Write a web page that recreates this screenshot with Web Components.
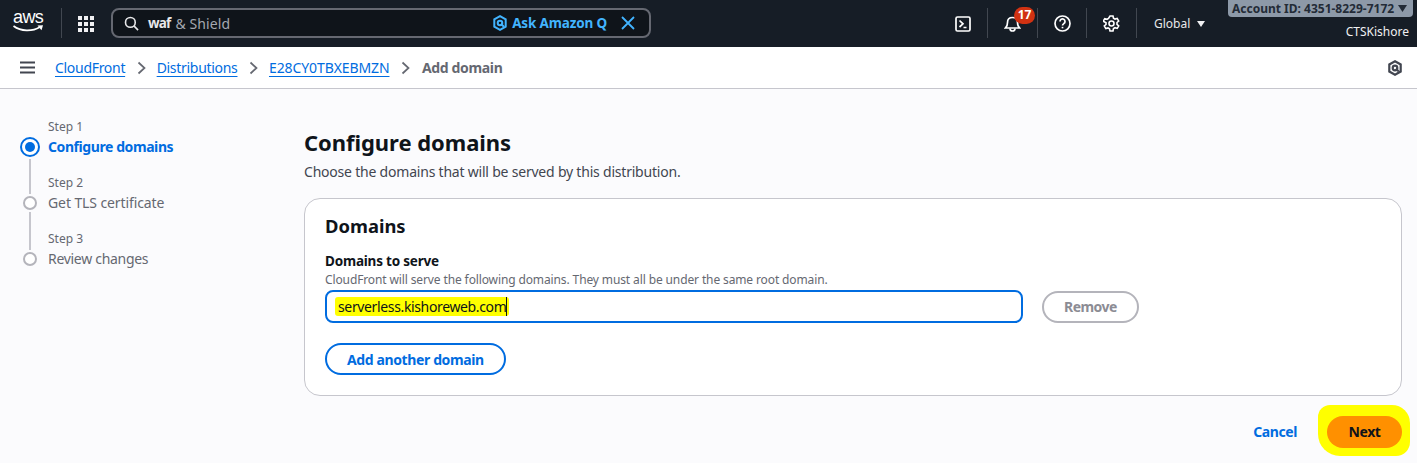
<!DOCTYPE html>
<html lang="en">
<head>
<meta charset="utf-8">
<title>Add domain</title>
<style>
html, body { margin: 0; height: 100%; }
body { background: #fbfbfd; font-family: "Noto Sans", sans-serif; color: #0f141a; overflow: hidden; }
</style>
</head>
<body>
<top-bar></top-bar>
<bread-bar></bread-bar>
<wizard-page>
    <wizard-steps slot="steps"></wizard-steps>
    <domains-form></domains-form>
</wizard-page>

<script>
const FONT = '"Noto Sans", sans-serif';

class UiElement extends HTMLElement {
    constructor() {
        super();
        this.attachShadow({ mode: 'open' }).innerHTML = this.render();
    }
    render() { return ''; }
}

class TopBar extends UiElement {
    render() {
        return `
        <style>
            :host { display: flex; align-items: stretch; height: 47px; background: #161d26; color: #fff; font-family: ${FONT}; }
            .logo { width: 61px; padding: 8px 0 0 13px; box-sizing: border-box; }
            .aws { position: relative; width: 30px; height: 30px; font: 18px/19px "Liberation Sans", sans-serif; text-align: center; letter-spacing: -.6px; }
            .aws svg { position: absolute; left: 0; top: 17px; }
            .sep { width: 1px; background: #414750; margin: 8px 0 9px; flex: none; }
            .grid { width: 48px; display: flex; align-items: center; justify-content: center; }
            .search { width: 540px; height: 30px; margin: 8px 0 0 1px; border: 2px solid #656871; border-radius: 8px; background: #0f141a; display: flex; align-items: center; padding: 0 14px 0 11px; box-sizing: border-box; font-size: 14px; }
            .search .q { margin-left: 9px; font-size: 13.5px; font-weight: 700; color: #e8e8ea; letter-spacing: -.8px; }
            .search .rest { color: #a4a8b0; margin-left: 5px; flex: 1; letter-spacing: .1px; }
            .ask { color: #42b4ff; font-weight: 700; font-size: 13.5px; letter-spacing: -.15px; margin: 0 14px 0 5px; }
            .spacer { flex: 1; }
            .ic { width: 49px; display: flex; align-items: center; justify-content: center; position: relative; }
            .ic.narrow { width: 48px; }
            .badge { position: absolute; left: 26px; top: 7px; width: 21px; height: 17px; border-radius: 9px; background: #d13212; color: #fff; font-size: 12px; font-weight: 700; line-height: 16px; text-align: center; }
            .region { width: 91px; padding-left: 17px; box-sizing: border-box; display: flex; align-items: center; gap: 7px; font-size: 12px; color: #e8e8ea; }
            .account { width: 189px; display: flex; flex-direction: column; align-items: flex-end; padding-right: 4px; box-sizing: border-box; }
            .pill { width: 185px; height: 17px; padding-left: 4px; box-sizing: border-box; background: #8d99a8; border-radius: 0 0 4px 4px; color: #232b37; font-size: 12px; font-weight: 700; line-height: 16px; display: flex; align-items: center; gap: 4px; white-space: nowrap; }
            .user { font-size: 12px; margin: 6px 4px 0 0; line-height: 17px; color: #f0f0f2; }
        </style>
        <div class="logo"><div class="aws">aws<svg width="31" height="8" viewBox="0 0 31 8"><path d="M.5 1C8 6.500 19 6.800 27 2" fill="none" stroke="#fff" stroke-width="1.700"/><path d="M24.500 .5l5.500-.3-1.500 5z" fill="#fff"/></svg></div></div>
        <div class="sep"></div>
        <div class="grid">
            <svg width="16" height="16" viewBox="0 0 16 16" fill="#f0f0f2"><rect x="0" y="0" width="4" height="4"/><rect x="6" y="0" width="4" height="4"/><rect x="12" y="0" width="4" height="4"/><rect x="0" y="6" width="4" height="4"/><rect x="6" y="6" width="4" height="4"/><rect x="12" y="6" width="4" height="4"/><rect x="0" y="12" width="4" height="4"/><rect x="6" y="12" width="4" height="4"/><rect x="12" y="12" width="4" height="4"/></svg>
        </div>
        <div class="search">
            <svg width="15" height="15" viewBox="0 0 16 16" fill="none" stroke="#e8e8ea" stroke-width="1.700"><circle cx="6.800" cy="6.800" r="5.200"/><path d="M10.600 10.600L15 15"/></svg>
            <span class="q">waf</span><span class="rest">&amp; Shield</span>
            <svg width="14" height="16" viewBox="0 0 14 16" fill="none" stroke="#42b4ff" stroke-width="2"><path d="M7 1.200l5.700 3.200v7.200L7 14.800l-5.700-3.200V4.400z"/><circle cx="7" cy="8" r="2.300"/><path d="M7.800 8.800l3.200 3"/></svg>
            <span class="ask">Ask Amazon Q</span>
            <svg width="14" height="14" viewBox="0 0 14 14" fill="none" stroke="#42b4ff" stroke-width="1.800"><path d="M1 1l12 12M13 1L1 13"/></svg>
        </div>
        <div class="spacer"></div>
        <div class="ic">
            <svg width="16" height="16" viewBox="0 0 16 16" fill="none" stroke="#fff" stroke-width="1.700"><rect x="1" y="1" width="14" height="14" rx="1.500"/><path d="M4.500 4.500L8 7.800l-3.500 3.200M8.500 11.500h3"/></svg>
        </div>
        <div class="sep"></div>
        <div class="ic">
            <svg width="17" height="17" viewBox="0 0 17 17" fill="none" stroke="#fff" stroke-width="1.700"><path d="M1.500 13h14c-1.600-1.400-2-2.800-2-5.500 0-3-2-5-5-5s-5 2-5 5c0 2.700-.4 4.100-2 5.500z"/><path d="M6 13.500a2.500 2.500 0 0 0 5 0"/></svg>
            <span class="badge">17</span>
        </div>
        <div class="sep"></div>
        <div class="ic narrow">
            <svg width="17" height="17" viewBox="0 0 17 17" fill="none" stroke="#fff" stroke-width="1.700"><circle cx="8.500" cy="8.500" r="7.500"/><path d="M6 6.500a2.500 2.500 0 1 1 3.800 2.100c-.9.6-1.300 1-1.300 2"/><path d="M8.500 11.800v1.500"/></svg>
        </div>
        <div class="sep"></div>
        <div class="ic">
            <svg width="17" height="17" viewBox="0 0 17 17" fill="none" stroke="#fff" stroke-width="1.600"><circle cx="8.500" cy="8.500" r="2.500"/><path d="M7 1h3l.5 2.200 1.500.9 2.200-.7 1.500 2.600-1.700 1.500v1.800l1.700 1.500-1.500 2.600-2.200-.7-1.500.9L10 16H7l-.5-2.200-1.500-.9-2.200.7-1.500-2.600 1.700-1.500V7.700L.3 6.200 1.800 3.600l2.200.7 1.500-.9z"/></svg>
        </div>
        <div class="sep"></div>
        <div class="region">Global <svg width="8" height="6" viewBox="0 0 8 6" fill="#f0f0f2"><path d="M0 0h8L4 6z"/></svg></div>
        <div class="account">
            <div class="pill">Account ID: 4351-8229-7172 <svg width="9" height="7" viewBox="0 0 9 7" fill="#232b37"><path d="M0 0h9L4.500 7z"/></svg></div>
            <div class="user">CTSKishore</div>
        </div>`;
    }
}

class BreadBar extends UiElement {
    render() {
        const chevron = '<svg class="chev" width="9" height="14" viewBox="0 0 9 14" fill="none" stroke="#656871" stroke-width="1.700"><path d="M1.500 1.500L7.500 7l-6 5.500"/></svg>';
        return `
        <style>
            :host { display: flex; align-items: center; height: 42px; background: #fff; border-bottom: 1px solid #c6c6cd; box-sizing: border-box; padding-left: 20px; font-family: ${FONT}; font-size: 14px; }
            .menu { margin-right: 20px; display: flex; }
            a { color: #006ce0; text-decoration: underline; text-underline-offset: 3px; letter-spacing: -.3px; }
            a.id { letter-spacing: -.1px; }
            .chev { margin: 0 10.5px 0 12px; flex: none; }
            .cur { color: #656871; font-weight: 700; letter-spacing: -.35px; margin-left: 1px; }
            .spacer { flex: 1; }
            .help { margin-right: 15px; display: flex; }
        </style>
        <div class="menu"><svg width="15" height="13" viewBox="0 0 15 13" fill="none" stroke="#424650" stroke-width="2"><path d="M0 1.500h15M0 6.500h15M0 11.500h15"/></svg></div>
        <a>CloudFront</a>${chevron}<a>Distributions</a>${chevron}<a class="id">E28CY0TBXEBMZN</a>${chevron}<span class="cur">Add domain</span>
        <div class="spacer"></div>
        <div class="help"><svg width="14" height="16" viewBox="0 0 14 16" fill="none" stroke="#424650" stroke-width="2.200"><path d="M7 1.300l5.700 3.200v7L7 14.700l-5.700-3.200v-7z"/><circle cx="7" cy="8" r="2.300"/><path d="M7.800 8.800l3 2.700"/></svg></div>`;
    }
}

class WizardPage extends UiElement {
    render() {
        return `
        <style>
            :host { display: grid; grid-template-columns: 304px 1098px; font-family: ${FONT}; }
            .main { padding-top: 39px; }
        </style>
        <slot name="steps"></slot>
        <div class="main"><slot></slot></div>`;
    }
}

class WizardSteps extends UiElement {
    render() {
        const step = (n, name, cls) => `
            <div class="step ${cls}">
                <div class="rail"><span class="line"></span></div>
                <div class="small">Step ${n}</div>
                <div class="dot"></div>
                <div class="name">${name}</div>
                <div class="tail"><span class="line"></span></div>
            </div>`;
        return `
        <style>
            :host { display: block; padding: 30px 0 0 20px; font-family: ${FONT}; color: #656871; }
            .step { display: grid; grid-template-columns: 20px 1fr; column-gap: 8px; grid-template-rows: 17px 22px 17px; }
            .rail { grid-column: 1; grid-row: 1; display: flex; justify-content: center; margin-bottom: -2px; }
            .tail { grid-column: 1; grid-row: 3; display: flex; justify-content: center; margin-top: -2px; }
            .line { width: 2px; background: #c6c6cd; height: 100%; }
            .first .rail, .last .tail { display: none; }
            .active .tail { margin-top: 1px; }
            .small { grid-column: 2; grid-row: 1; font-size: 12px; line-height: 15px; }
            .dot { grid-column: 1; grid-row: 2; width: 14px; height: 14px; box-sizing: border-box; border: 2px solid #b4b4bb; border-radius: 50%; background: #fff; align-self: center; justify-self: center; }
            .name { grid-column: 2; grid-row: 2; font-size: 14px; line-height: 22px; letter-spacing: -.1px; }
            .last .name { letter-spacing: -.3px; }
            .active .dot { width: 20px; height: 20px; border: 2px solid #006ce0; }
            .active .dot::after { content: ""; display: block; width: 10px; height: 10px; margin: 3px; background: #006ce0; border-radius: 50%; }
            .active .name { color: #006ce0; font-weight: 700; letter-spacing: -.42px; }
        </style>
        ${step(1, 'Configure domains', 'first active')}
        ${step(2, 'Get TLS certificate', '')}
        ${step(3, 'Review changes', 'last')}`;
    }
}

class PillButton extends UiElement {
    render() {
        return `
        <style>
            :host { display: inline-flex; align-items: center; justify-content: center; box-sizing: border-box; border: 2px solid #006ce0; border-radius: 16px; color: #006ce0; font-family: ${FONT}; font-size: 14px; font-weight: 700; letter-spacing: -.38px; height: 32px; padding: 0 20px; background: #fff; }
            :host([disabled]) { border-color: #b4b4bb; color: #8c8c94; letter-spacing: -.55px; }
            :host([primary]) { border: 0; background: #ff9000; color: #0f141a; letter-spacing: -.4px; padding: 0 21.5px; }
            :host([plain]) { border: 0; background: none; letter-spacing: -.4px; }
        </style>
        <slot></slot>`;
    }
}

class DomainsForm extends UiElement {
    render() {
        return `
        <style>
            :host { display: block; font-family: ${FONT}; }
            h1 { margin: 0; font-size: 22px; line-height: 28px; font-weight: 700; color: #0f141a; letter-spacing: -.05px; }
            .lead { margin: 6px 0 0; font-size: 14px; line-height: 20px; color: #424650; letter-spacing: -.21px; }
            .panel { margin-top: 16px; height: 198px; box-sizing: border-box; background: #fff; border: 1px solid #c6c6cd; border-radius: 16px; padding: 14px 20px; }
            h2 { margin: 0; font-size: 18.4px; line-height: 26px; font-weight: 700; }
            .label { margin-top: 14px; font-size: 13.5px; line-height: 17px; font-weight: 700; letter-spacing: -.2px; }
            .hint { margin-top: 2px; font-size: 12px; line-height: 16px; color: #656871; letter-spacing: -.12px; }
            .row { display: flex; gap: 19px; margin-top: 2px; align-items: center; }
            .field { width: 698px; height: 33px; box-sizing: border-box; border: 2px solid #006ce0; border-radius: 8px; background: #fff; display: flex; align-items: center; padding-left: 8px; font-size: 14px; letter-spacing: -.36px; }
            mark { background: #ffff00; color: #0f141a; padding: 0 2px 0 3px; line-height: 19px; border-radius: 3px; }
            .caret { border-right: 1px solid #0f141a; }
            .add { margin-top: 20px; }
            .actions { display: flex; justify-content: flex-end; align-items: center; height: 70px; }
            .next-wrap { padding: 11px 8px 8px 9px; margin: -2px -8px 0 1px; background: #ffff00; border-radius: 12px 18px 14px 22px; display: flex; }
        </style>
        <h1>Configure domains</h1>
        <p class="lead">Choose the domains that will be served by this distribution.</p>
        <div class="panel">
            <h2>Domains</h2>
            <div class="label">Domains to serve</div>
            <div class="hint">CloudFront will serve the following domains. They must all be under the same root domain.</div>
            <div class="row">
                <div class="field"><mark><span class="caret">serverless.kishoreweb.com</span></mark></div>
                <pill-button disabled>Remove</pill-button>
            </div>
            <pill-button class="add">Add another domain</pill-button>
        </div>
        <div class="actions">
            <pill-button plain>Cancel</pill-button>
            <div class="next-wrap"><pill-button primary>Next</pill-button></div>
        </div>`;
    }
}

customElements.define('top-bar', TopBar);
customElements.define('bread-bar', BreadBar);
customElements.define('wizard-page', WizardPage);
customElements.define('wizard-steps', WizardSteps);
customElements.define('pill-button', PillButton);
customElements.define('domains-form', DomainsForm);
</script>
</body>
</html>
